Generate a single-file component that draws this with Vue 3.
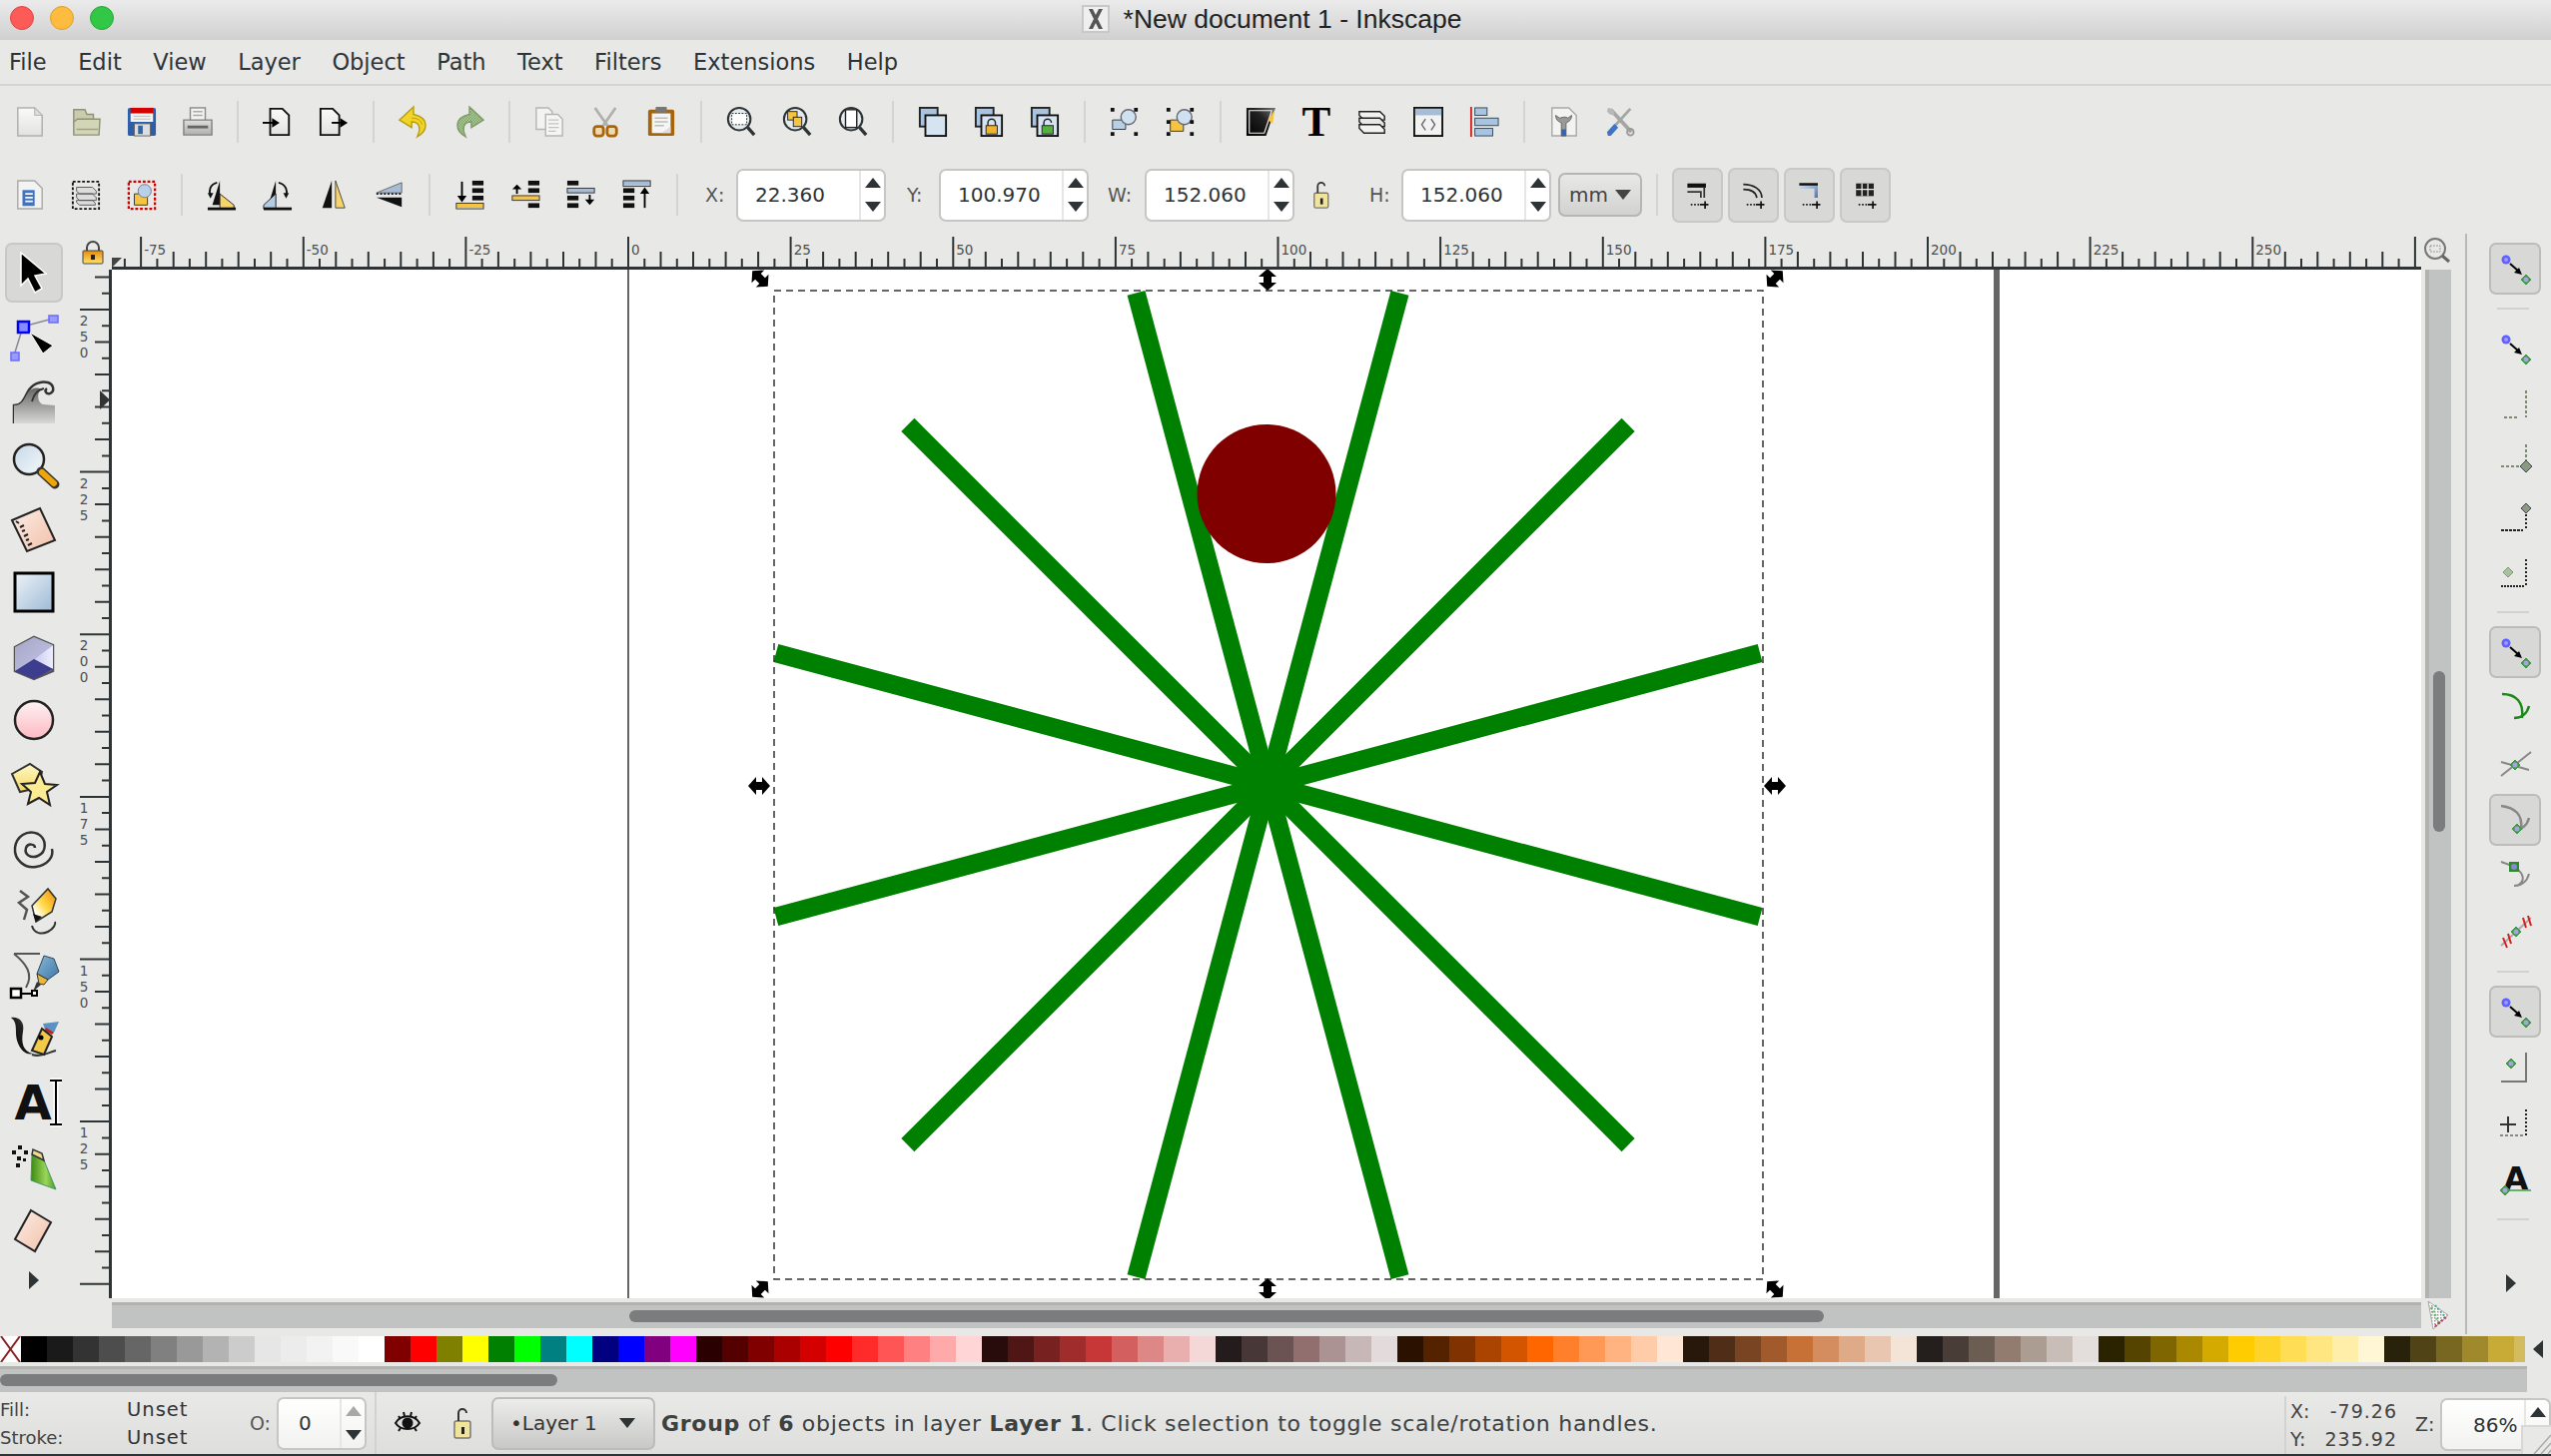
<script setup>
const menus = ['File','Edit','View','Layer','Object','Path','Text','Filters','Extensions','Help']

const K = '#111'
const mag = (inner) => `<circle cx="14" cy="13" r="12" fill="#e4ebef" stroke="#2e3436" stroke-width="2.2"/>${inner}<path d="M23 22l7 8" stroke="#2e3436" stroke-width="3.5"/>`
const node = (x, y, r = 5) => `<path d="M${x} ${y - r}l${r} ${r}-${r} ${r}-${r}-${r}z" fill="#3f9a46" stroke="#3f9a46"/><circle cx="${x}" cy="${y}" r="${r * 0.5}" fill="#a5a5dc"/>`
const blue = (x, y) => `<circle cx="${x}" cy="${y}" r="4.5" fill="#6060ff"/><circle cx="${x}" cy="${y}" r="2" fill="#9a9aff"/>`
const snapArrow = `${blue(7, 7)}<path d="M11 11l9 8" stroke="#000" stroke-width="2"/><path d="M23 22l-8-2 5-5z" fill="#000"/>${node(27, 27)}`
const dashG = 'stroke="#7b8a70" stroke-width="2" stroke-dasharray="3 2" fill="none"'
const dashK = 'stroke="#222" stroke-width="2" stroke-dasharray="2 2" fill="none"'
const bars = (arr) => arr.map(([x, y, w, c]) => `<rect x="${x}" y="${y}" width="${w}" height="5" fill="${c}"/>`).join('')
const toggleBase = (top) => `${top}<path d="M8 27h11" stroke="#222" stroke-width="2" stroke-dasharray="2 2"/><path d="M19 27h10M25 23v9" stroke="#111" stroke-width="2"/>`

const icons = {
  new: `<path d="M3 1h18l8 8v22H3z" fill="url(#gPage)" stroke="#b0b0ae" stroke-width="1.6"/><path d="M21 1v8h8z" fill="#dededc" stroke="#b0b0ae"/>`,
  open: `<path d="M3 3h12l2 5h7v10H3z" fill="#c9cdab" stroke="#8f9274" stroke-width="1.5"/><path d="M3 30V16l4-3h24l-1 17z" fill="#d2d5b6" stroke="#8f9274" stroke-width="1.5"/><path d="M6 24h23" stroke="#9da083" stroke-width="1.5"/>`,
  save: `<rect x="1" y="1" width="30" height="30" rx="2" fill="#2f5ea8"/><rect x="4" y="1" width="24" height="6" fill="#d40000"/><rect x="4" y="7" width="24" height="9" fill="#f3f3f1"/><path d="M7 10h18M7 13h18" stroke="#bbb"/><rect x="8" y="18" width="17" height="13" fill="#dedede" stroke="#666"/><rect x="12" y="20" width="5" height="9" fill="#37669e"/>`,
  print: `<rect x="8" y="1" width="16" height="14" fill="#f2f2f0" stroke="#8a8a88" stroke-width="1.5"/><path d="M11 5h10M11 9h10" stroke="#aaa" stroke-width="1.5"/><path d="M1 14h30v16H1z" fill="url(#gGrey)" stroke="#80807e" stroke-width="1.5"/><rect x="5" y="20" width="22" height="3" fill="#666"/>`,
  import: `<path d="M8 2h13l7 7v21H8z" fill="url(#gPage)" stroke="${K}" stroke-width="2"/><path d="M0 17h15" stroke="#000" stroke-width="2"/><path d="M18 17l-8-5v10z" fill="#000"/>`,
  export: `<path d="M2 2h13l7 7v21H2z" fill="url(#gPage)" stroke="${K}" stroke-width="2"/><path d="M14 17h14" stroke="#000" stroke-width="2"/><path d="M31 17l-8-5v10z" fill="#000"/>`,
  undo: `<path d="M16 0L1 14l13 8v-6c7 0 11 5 6 16 11-6 14-20-4-24z" fill="#f2d426" stroke="#b79d10" stroke-width="1.5"/><path d="M14 12c6 0 10 2 11 7" stroke="#b79d10" fill="none"/>`,
  redo: `<path d="M16 0l15 14-13 8v-6c-7 0-11 5-6 16C1 26-2 12 16 8z" fill="url(#pGreen)" stroke="#7f9a6c" stroke-width="1.5"/>`,
  copy: `<path d="M2 1h13l4 4v19H2z" fill="#f3f3f1" stroke="#b5b5b3" stroke-width="1.5"/><path d="M12 8h13l5 5v18H12z" fill="#f5f5f3" stroke="#b5b5b3" stroke-width="1.5"/><path d="M15 14h11M15 18h11M15 22h11M15 26h8" stroke="#c2c2c0" stroke-width="1.5"/>`,
  cut: `<path d="M5 1l14 20M27 1L13 21" stroke="#b0b0ae" stroke-width="3"/><rect x="4" y="21" width="10" height="10" rx="3" fill="#f0d9b0" stroke="#a8660c" stroke-width="3"/><rect x="18" y="21" width="10" height="10" rx="3" fill="#f0d9b0" stroke="#a8660c" stroke-width="3"/>`,
  paste: `<rect x="2" y="3" width="28" height="28" rx="2" fill="#a5650f"/><rect x="6" y="7" width="20" height="21" fill="#f5f5f3"/><rect x="10" y="0" width="12" height="6" rx="1" fill="#777"/><path d="M9 12h14M9 16h14M9 20h10" stroke="#bdbdbb" stroke-width="1.5"/><path d="M16 28l10-7v7z" fill="#ddd"/>`,
  zsel: mag(`<rect x="6" y="7" width="16" height="12" fill="#fff" stroke="#222" stroke-dasharray="2 1.5"/>`),
  zdraw: mag(`<rect x="6" y="5" width="10" height="9" fill="#f5c542" stroke="#222"/><rect x="12" y="11" width="9" height="10" fill="#f5c542" stroke="#222"/>`),
  zpage: mag(`<rect x="8" y="3" width="12" height="19" fill="#fff" stroke="#222" stroke-width="1.5"/>`),
  dup: `<rect x="2" y="1" width="19" height="20" fill="#a8c4e0" stroke="#222" stroke-width="2"/><rect x="8" y="9" width="22" height="22" fill="#d6e4f2" stroke="${K}" stroke-width="2"/>`,
  clone: `<rect x="2" y="1" width="19" height="20" fill="#a8c4e0" stroke="#222" stroke-width="2"/><rect x="8" y="9" width="22" height="22" fill="#d6e4f2" stroke="${K}" stroke-width="2"/><rect x="13" y="20" width="12" height="9" fill="#f0b32e" stroke="#222"/><path d="M15 20v-3a4 4 0 0 1 8 0v3" fill="none" stroke="#222" stroke-width="1.5"/>`,
  unlink: `<rect x="2" y="1" width="19" height="20" fill="#a8c4e0" stroke="#222" stroke-width="2"/><rect x="8" y="9" width="22" height="22" fill="#d6e4f2" stroke="${K}" stroke-width="2"/><rect x="13" y="20" width="12" height="9" fill="#55b03e" stroke="#222"/><path d="M15 20v-3a4 4 0 0 1 8 0" fill="none" stroke="#222" stroke-width="1.5"/>`,
  same1: `<path d="M3 24h14V14H3z" fill="#b8cfe6" stroke="#333"/><circle cx="20" cy="11" r="8" fill="#cfe0ee" stroke="#667" stroke-width="1.5"/><path d="M1 1h4v4H1zM26 1h4v4h-4zM1 27h4v4H1zM26 27h4v4h-4z" fill="#111"/>`,
  same2: `<path d="M5 26h14V14H5z" fill="#f5c542" stroke="#333"/><circle cx="20" cy="11" r="8" fill="#cfe0ee" stroke="#667" stroke-width="1.5"/><path d="M1 1h4v4H1zM26 1h4v4h-4zM1 27h4v4H1zM26 27h4v4h-4zM1 14h4v4H1zM26 14h4v4h-4z" fill="#111"/>`,
  fs: `<path d="M1 1h31L22 31H1z" fill="url(#gDark)"/><path d="M4 4h24L20 28H4z" fill="none" stroke="#eee" stroke-width="1.2"/><path d="M24 14l7-11-2 15z" fill="#f5c542"/>`,
  text: `<text x="16" y="31" text-anchor="middle" class="svg-serif" font-size="46">T</text>`,
  layers: `<path d="M2 5h22l5 5v4H7l-5-5z" fill="#f2f2f0" stroke="#222" stroke-width="1.5"/><path d="M2 12h22l5 5v4H7l-5-5z" fill="#e8e8e6" stroke="#222" stroke-width="1.5"/><path d="M2 19h22l5 5v4H7l-5-5z" fill="#f2f2f0" stroke="#222" stroke-width="1.5"/>`,
  xml: `<rect x="1" y="1" width="30" height="30" fill="#f2f2f0" stroke="#111" stroke-width="2"/><rect x="2" y="2" width="28" height="7" fill="#a5bdd6"/><path d="M13 13l-4 6 4 6M19 13l4 6-4 6" fill="none" stroke="#667" stroke-width="1.5"/>`,
  align: `<path d="M2 0v32" stroke="#c22" stroke-width="2"/><rect x="6" y="1" width="13" height="8" fill="#a8c4e0" stroke="#345"/><rect x="6" y="12" width="25" height="8" fill="#a8c4e0" stroke="#345"/><rect x="6" y="23" width="19" height="8" fill="#a8c4e0" stroke="#345"/>`,
  prefs: `<path d="M3 1h18l8 8v22H3z" fill="#f3f3f1" stroke="#a8a8a6" stroke-width="1.5"/><path d="M7 9c0 6 4 7 6 8v14h5V17c3-1 6-3 6-8l-4 3-2-1-3 0-4 1z" fill="#9a9a98" stroke="#666"/><rect x="13" y="24" width="5" height="7" fill="#3565b0"/>`,
  tools: `<path d="M6 3l22 24" stroke="#a5a5a3" stroke-width="4"/><path d="M27 2L6 25" stroke="#a5a5a3" stroke-width="3"/><path d="M3 1c5 0 8 4 6 8l-4-1-3-3z" fill="#b8b8b6"/><path d="M3 31l-1-4 8-9 4 4-8 9z" fill="#3f74c4"/><circle cx="27" cy="27" r="3.5" fill="none" stroke="#999" stroke-width="2"/>`,
  selall: `<path d="M3 1h18l8 8v22H3z" fill="#f3f3f1" stroke="#a8a8a6" stroke-width="1.5"/><path d="M8 11h13v17H8z" fill="#3f74c4"/><path d="M11 15h8M11 19h8M11 23h8" stroke="#fff" stroke-width="2"/>`,
  selallL: `<rect x="2" y="2" width="28" height="29" fill="none" stroke="#111" stroke-width="2" stroke-dasharray="3 2"/><path d="M6 8h17l4 4v3H9l-3-3zM6 15h17l4 4v3H9l-3-3zM6 22h17l3 3v2H9l-3-3z" fill="#ddd" stroke="#555"/>`,
  desel: `<rect x="2" y="2" width="28" height="29" fill="none" stroke="#c00" stroke-width="2.4" stroke-dasharray="3 2"/><path d="M8 15h14v12H8z" fill="#f5c542" stroke="#333"/><circle cx="19" cy="12" r="7" fill="#b8d0ea" stroke="#778"/>`,
  rotl: `<path d="M14 1L6 27h8z" fill="#111"/><path d="M14 31V15l15 12v4z" fill="#f6d46a" stroke="#222"/><path d="M1 31h30" stroke="#111" stroke-width="3"/><path d="M11 3C3 5 2 12 4 17" fill="none" stroke="#111" stroke-width="2"/><path d="M1 14l6 0-3 6z" fill="#111"/>`,
  rotr: `<path d="M14 1L6 27h8z" fill="#111"/><path d="M14 31V15L1 27v4z" fill="#b4cbe2" stroke="#222"/><path d="M1 31h30" stroke="#111" stroke-width="3"/><path d="M17 3c8 2 10 9 8 14" fill="none" stroke="#111" stroke-width="2"/><path d="M22 14h6l-3 6z" fill="#111"/>`,
  fliph: `<path d="M14 1L4 30h10z" fill="#111"/><path d="M18 1l10 29H18z" fill="#f6d46a" stroke="#444"/>`,
  flipv: `<path d="M29 3L2 14h27z" fill="#a5bdd6" stroke="#666"/><path d="M2 15h27" stroke="#111" stroke-dasharray="2 2" stroke-width="2"/><path d="M29 29L2 19h27z" fill="#111"/>`,
  top: bars([[19, 1, 12, K], [19, 9, 12, K], [19, 17, 12, K], [2, 25, 29, '#f5c542']]) + `<rect x="2" y="25" width="29" height="6" fill="none" stroke="#333"/><path d="M8 2v18" stroke="#000" stroke-width="2"/><path d="M8 24l-5-7h10z" fill="#000"/>`,
  raise: bars([[19, 1, 12, K], [19, 9, 12, K], [2, 17, 29, '#f5c542'], [19, 25, 12, K]]) + `<rect x="2" y="17" width="29" height="5" fill="none" stroke="#333"/><path d="M7 5l-5 5h10z" fill="#000"/><path d="M7 9v6" stroke="#000" stroke-width="2"/>`,
  lower: bars([[1, 1, 12, K], [1, 9, 29, '#a5bdd6'], [1, 17, 12, K], [1, 25, 12, K]]) + `<rect x="1" y="9" width="29" height="5" fill="none" stroke="#333"/><path d="M25 16v6" stroke="#000" stroke-width="2"/><path d="M25 27l-5-6h10z" fill="#000"/>`,
  bottom: bars([[1, 1, 29, '#a5bdd6'], [1, 9, 12, K], [1, 17, 12, K], [1, 25, 12, K]]) + `<rect x="1" y="1" width="29" height="6" fill="none" stroke="#333"/><path d="M24 12v18" stroke="#000" stroke-width="2"/><path d="M24 8l-5 7h10z" fill="#000"/>`,
  t1: toggleBase(`<path d="M4 2h22v5H4z" fill="#111"/><path d="M24 7v12M4 12h16v7" fill="none" stroke="#333" stroke-width="2"/>`),
  t2: toggleBase(`<path d="M4 3c12 0 22 6 22 16M4 9c8 0 15 3 16 10" fill="none" stroke="#222" stroke-width="2"/>`),
  t3: toggleBase(`<path d="M4 3h22v16h-4V8H4z" fill="url(#gBlue)"/><path d="M4 3h22" stroke="#111" stroke-width="3"/>`),
  t4: toggleBase(`<path d="M5 2h21v15H5z" fill="#222"/><path d="M12 2v15M19 2v15M5 9h21" stroke="#eee" stroke-width="1.5"/>`),
  eye: `<path d="M1 16c5-9 19-9 24 0-5 8-19 8-24 0z" fill="#ddd" stroke="#111" stroke-width="2"/><circle cx="13" cy="16" r="5.5" fill="#111"/><path d="M4 9l2 3M9 5l1 4M17 5l-1 4M22 9l-2 3M4 24l2-3M22 24l-2-3" stroke="#111" stroke-width="2"/>`,
  unlock: `<rect x="2" y="14" width="16" height="17" rx="2" fill="#f0e49a" stroke="#777" stroke-width="1.5"/><path d="M6 14V6a4 4 0 0 1 8 0" fill="none" stroke="#333" stroke-width="2"/><rect x="9" y="20" width="3" height="7" fill="#222"/>`,
  lock: `<rect x="1" y="10" width="20" height="13" rx="1" fill="url(#gLock)" stroke="#444"/><path d="M5 10V7a6 6 0 0 1 12 0v3" fill="none" stroke="#444" stroke-width="2"/><rect x="9" y="14" width="4" height="5" fill="#222"/>`,
  search: `<circle cx="13" cy="13" r="10" fill="none" stroke="#777" stroke-width="2"/><rect x="8" y="10" width="10" height="6" fill="none" stroke="#999" stroke-dasharray="2 1"/><path d="M20 20l7 6" stroke="#666" stroke-width="3"/>`,
  rgb: `<path d="M3 2l20 14L8 30z" fill="url(#pRgb)" stroke="#aaa"/><path d="M6 8l8 16" stroke="#4a4" stroke-width="3" stroke-dasharray="2 2" opacity=".7"/><path d="M10 6l10 12" stroke="#2a8" stroke-width="2" stroke-dasharray="2 2" opacity=".7"/><path d="M10 27l12-10" stroke="#a24" stroke-width="2.5" stroke-dasharray="2 2" opacity=".8"/>`,
  // left tools
  selector: `<path d="M11 3v33l7-7 7 14 7-4-7-13 11-2z" fill="#000" stroke="#fff" stroke-width="1.5"/>`,
  nodeTool: `<path d="M13 12L4 41M13 12L43 4" stroke="#889" stroke-width="1.5"/><rect x="8" y="7" width="11" height="11" fill="#8a8aff" stroke="#00f" stroke-width="2.5"/><rect x="39" y="1" width="9" height="7" fill="#9a9aff" stroke="#6a6aff" stroke-width="1.5"/><rect x="1" y="38" width="8" height="8" fill="#9a9aff" stroke="#6a6aff" stroke-width="1.5"/><path d="M20 18l23 13-10 8z" fill="#000" stroke="#fff"/>`,
  tweak: `<path d="M4 46V28c8 0 10-6 14-14 4-7 12-11 20-9 6 2 7 9 2 11-4 1-6-3-3-5" fill="none" stroke="#333" stroke-width="2.5"/><path d="M4 28c8 0 10-6 14-13 3-4 9-6 13-3-4 3-4 13 2 15l12 1v18H4z" fill="url(#gWave)"/><path d="M22 24c2-8 7-12 12-13" fill="none" stroke="#333" stroke-width="2"/>`,
  zoomTool: `<circle cx="19" cy="18" r="15" fill="url(#gGlass)" stroke="#222" stroke-width="2.5"/><path d="M31 30l14 13" stroke="#333" stroke-width="9" stroke-linecap="round"/><path d="M32 31l12 11" stroke="#f0a50a" stroke-width="6" stroke-linecap="round"/>`,
  measure: `<path d="M2 15L30 3l15 32-28 11z" fill="url(#gPink)" stroke="#222" stroke-width="2"/><path d="M6 16l3 2M10 22l4-2M12 26l3-1M14 31l4-2M16 35l3-1M18 40l4-2" stroke="#222" stroke-width="2"/>`,
  rectTool: `<rect x="5" y="4" width="38" height="38" fill="url(#gRect)" stroke="#000" stroke-width="3"/>`,
  box: `<path d="M5 14L24 4l19 8v26L24 46 5 38z" fill="#8f8fc0" stroke="#555" stroke-width="2.5"/><path d="M24 26L43 12v24z" fill="url(#gBoxR)"/><path d="M5 14L24 4l19 8-19 14v0L5 38z" fill="url(#gBoxL)"/><path d="M5 38l19-12 19 10-19 10z" fill="#3d3d90"/>`,
  ell: `<ellipse cx="24" cy="24" rx="19" ry="19" fill="url(#gBall)" stroke="#222" stroke-width="2.5"/>`,
  star: `<path d="M2 14L20 4l12 8-4 16-18 4z" fill="url(#gYel)" stroke="#333" stroke-width="2"/><path d="M30 12l5 12 12 1-10 7 3 13-11-7-11 6 3-12-9-8 13-1z" fill="#fbeb93" stroke="#222" stroke-width="2"/>`,
  spiral: `<path d="M25 24c0-4-7-5-9 0-2 7 5 11 12 8 9-4 9-17 0-22C17 5 6 13 5 24c-1 12 10 21 21 19 12-2 18-10 16-18" fill="none" stroke="#333" stroke-width="2.5"/>`,
  pencil: `<path d="M10 3l8 6-9 6 8 7-3 10" fill="none" stroke="#555" stroke-width="2.5"/><path d="M26 34l-4-16L38 1l8 10-4 13z" fill="url(#gPen)" stroke="#333" stroke-width="1.5"/><path d="M26 34l-3-8 9 3z" fill="#111"/><path d="M22 38c2 8 10 9 16 6 6-3 8-8 7-10" fill="none" stroke="#333" stroke-width="2"/>`,
  pen: `<path d="M4 2h26M4 2c12 10 20 20 12 34" fill="none" stroke="#555" stroke-width="2"/><rect x="1" y="37" width="10" height="9" fill="#fff" stroke="#000" stroke-width="2.5"/><path d="M11 42h11" stroke="#000" stroke-width="2"/><rect x="22" y="39" width="5" height="5" fill="#fff" stroke="#000" stroke-width="2"/><path d="M27 22l7-18 10 3 5 13-11 8z" fill="url(#gPenB)" stroke="#345"/><path d="M27 22l11 6-4 5-5-1z" fill="#e9b73a" stroke="#333"/><path d="M27 30l-4 10 8-7" fill="#333"/>`,
  calli: `<path d="M1 3c8-1 14 4 12 14-2 11 0 20 10 22C14 42 6 30 6 18 6 9 5 6 1 3z" fill="url(#gDark)"/><path d="M22 40c8 3 16-2 24-4" fill="none" stroke="#333" stroke-width="2"/><path d="M33 9l16-2-5 11-9-3z" fill="#5b92c2"/><path d="M36 13l8 5-2 2-7-4z" fill="#c02020"/><path d="M32 14l10 8-8 18-12-4z" fill="#f3c94a" stroke="#222" stroke-width="2"/><circle cx="31" cy="23" r="2.5" fill="#000"/>`,
  textTool: `<text x="23" y="41" text-anchor="middle" class="svg-bold" font-size="48">A</text><path d="M42 2h12M48 2v44M42 46h12" transform="translate(-2 0)" stroke="#fff" stroke-width="5"/><path d="M42 2h12M48 2v44M42 46h12" transform="translate(-2 0)" stroke="#000" stroke-width="2"/>`,
  spray: `<g fill="#111"><rect x="2" y="8" width="4" height="4"/><rect x="8" y="3" width="4" height="4"/><rect x="14" y="8" width="4" height="4"/><rect x="7" y="14" width="4" height="4"/><rect x="13" y="16" width="3" height="3"/><rect x="6" y="21" width="4" height="4"/></g><path d="M22 12l12 6 12 29-25-9z" fill="url(#gGreen)" stroke="#496" stroke-width="1"/><path d="M22 12l12 6-2-7-9-4z" fill="#f0d98a" stroke="#333" stroke-width="1.5"/>`,
  eraser: `<path d="M21 4l20 12-16 29L5 33z" fill="url(#gPink)" stroke="#222" stroke-width="2"/>`,
  // right snap
  s1: snapArrow,
  s2: `<path d="M5 29h14" ${dashG}/><path d="M27 2v27" ${dashG}/>`,
  s3: `<path d="M2 22h18" ${dashG}/><path d="M27 0v16" ${dashG}/><path d="M27 16l6 6-6 6-6-6z" fill="#8a9a80" stroke="#445"/>`,
  s4: `<path d="M2 30h22" stroke="#222" stroke-width="2" stroke-dasharray="3 1"/><path d="M27 14v16" ${dashK}/><path d="M27 3l5 5-5 5-5-5z" fill="#8a9a80" stroke="#445"/>`,
  s5: `<path d="M2 30h24" stroke="#222" stroke-width="2" stroke-dasharray="2 1"/><path d="M27 3v27" ${dashK}/><path d="M9 11l5 5-5 5-5-5z" fill="#aac0a0" stroke="#7a9a70"/>`,
  b1: `<path d="M3 2c14 0 22 8 20 24M30 14c-2 8-8 12-15 12" fill="none" stroke="#1a8a1a" stroke-width="2.5"/>`,
  b2: `<path d="M2 28L32 4M2 14l28 8" stroke="#888" stroke-width="2"/>${node(16, 17, 5)}`,
  b3: `<path d="M2 2c14 2 22 8 20 24M30 14c-2 8-8 12-15 12" fill="none" stroke="#888" stroke-width="2.5"/>${node(18, 25, 5)}`,
  b4: `<path d="M2 2l14 5M16 8c10 6 10 14 2 18M30 14c-2 8-8 12-15 12" fill="none" stroke="#888" stroke-width="2"/><rect x="10" y="2" width="10" height="10" fill="#2d8a2d"/><circle cx="15" cy="7" r="3" fill="#8a8ad0"/>`,
  b5: `<path d="M2 30L32 2" stroke="#aaa" stroke-width="2"/><path d="M4 22l4 10M9 18l3 10M24 2l3 10M29 0l3 10" stroke="#d81e1e" stroke-width="2"/>${node(17, 16, 5)}`,
  o1: `<path d="M2 30h26M27 1v29" fill="none" stroke="#777" stroke-width="2"/>${node(12, 12, 5)}`,
  o2: `<path d="M1 17h16M9 9v16" stroke="#333" stroke-width="2"/><path d="M1 28h24" stroke="#888" stroke-width="2" stroke-dasharray="3 2"/><path d="M27 2v26" ${dashK}/>`,
  o3: `<text x="17" y="26" text-anchor="middle" class="svg-bold" font-size="32">A</text><path d="M8 27h24" stroke="#6ab06a" stroke-width="2"/>${node(6, 27, 5)}`,
}

const row1 = ['new','open','save','print','|','import','export','|','undo','redo','|','copy','cut','paste','|','zsel','zdraw','zpage','|','dup','clone','unlink','|','same1','same2','|','fs','text','layers','xml','align','|','prefs','tools']
const row2 = ['selall','selallL','desel','|','rotl','rotr','fliph','flipv','|','top','raise','lower','bottom','|']
const tools = ['selector','nodeTool','tweak','zoomTool','measure','rectTool','box','ell','star','spiral','pencil','pen','calli','textTool','spray','eraser']
const snaps = [
  { i: 's1', on: true }, { sep: true },
  { i: 's1' }, { i: 's2' }, { i: 's3' }, { i: 's4' }, { i: 's5' }, { sep: true },
  { i: 's1', on: true }, { i: 'b1' }, { i: 'b2' }, { i: 'b3', on: true }, { i: 'b4' }, { i: 'b5' }, { sep: true },
  { i: 's1', on: true }, { i: 'o1' }, { i: 'o2' }, { i: 'o3' }, { sep: true },
]
const toggles = ['t1','t2','t3','t4']
const fields = [
  { k: 'fx', l: 'X:', v: '22.360' },
  { k: 'fy', l: 'Y:', v: '100.970' },
  { k: 'fw', l: 'W:', v: '152.060' },
]

const palette = '000000 1a1a1a 333333 4d4d4d 666666 808080 999999 b3b3b3 cccccc e6e6e6 ececec f2f2f2 f9f9f9 ffffff 800000 ff0000 808000 ffff00 008000 00ff00 008080 00ffff 000080 0000ff 800080 ff00ff 2b0000 550000 800000 aa0000 d40000 ff0000 ff2a2a ff5555 ff8080 ffaaaa ffd5d5 280b0b 501616 782121 a02c2c c83737 d35f5f de8787 e9afaf f4d7d7 241c1c 483737 6c5353 916f6f ac9393 c8b7b7 e3dbdb 2b1100 552200 803300 aa4400 d45500 ff6600 ff7f2a ff9955 ffb380 ffccaa ffe6d5 28170b 502d16 784421 a05a2c c87137 d38d5f deaa87 e9c6af f4e3d7 241f1c 483e37 6c5d53 917c6f ac9d93 c8beb7 e3dedb 2b2200 554400 806600 aa8800 d4aa00 ffcc00 ffd42a ffdd55 ffe680 ffeeaa fff6d5 28220b 504416 786721 a0892c c8ab37 d3bc5f'.split(' ').map(c => '#' + c)

// rulers: 1 mm = 6.505 px, origin at page x 629 and 250 mm at page y 310
const PX = 6.505
const hx = (mm) => 629 + mm * PX
const vy = (mm) => 310 + (250 - mm) * PX
let hp = ''
const hLabels = []
for (let i = -32; i <= 110; i++) {
  const mm = i * 2.5, x = hx(mm).toFixed(1)
  const len = i % 10 === 0 ? 30 : i % 2 === 0 ? 15 : 8
  hp += `M${x} 267V${267 - len}`
  if (i % 10 === 0 && mm < 275) hLabels.push({ x: hx(mm) + 3, t: mm < 0 ? '-' + -mm : '' + mm })
}
let vp = ''
const vLabels = []
for (let i = 103; i >= 40; i--) {
  const mm = i * 2.5, y = vy(mm).toFixed(1)
  const len = i % 10 === 0 ? 30 : i % 2 === 0 ? 15 : 8
  vp += `M110 ${y}H${110 - len}`
  if (i % 10 === 0) {
    ;[...String(mm)].forEach((d, n) => {
      const ly = vy(mm) + 16 + n * 16
      if (ly < 1299) vLabels.push({ y: ly, t: d })
    })
  }
}

// star of twelve rays around the selection's centre
const CX = 1269.5, CY = 786, R = 510
const rays = Array.from({ length: 6 }, (_, k) => {
  const a = ((15 + 30 * k) * Math.PI) / 180
  const dx = R * Math.sin(a), dy = R * Math.cos(a)
  return { x1: CX - dx, y1: CY - dy, x2: CX + dx, y2: CY + dy }
})
const handles = [
  { x: 761, y: 279, r: -45 }, { x: 1269, y: 280, r: 0 }, { x: 1777, y: 279, r: 45 },
  { x: 760, y: 787, r: 90 }, { x: 1777, y: 787, r: 90 },
  { x: 761, y: 1291, r: 45 }, { x: 1269, y: 1291, r: 0 }, { x: 1777, y: 1291, r: -45 },
]
</script>

<template>
  <div class="win">
    <svg class="defs" width="0" height="0">
      <defs>
        <linearGradient id="gPage" x1="0" y1="0" x2="0" y2="1"><stop offset="0" stop-color="#fafafa"/><stop offset="1" stop-color="#e2e2e0"/></linearGradient>
        <linearGradient id="gGrey" x1="0" y1="0" x2="0" y2="1"><stop offset="0" stop-color="#dededc"/><stop offset="1" stop-color="#b0b0ae"/></linearGradient>
        <linearGradient id="gDark" x1="0" y1="1" x2="1" y2="0"><stop offset="0" stop-color="#000"/><stop offset=".6" stop-color="#222"/><stop offset="1" stop-color="#777"/></linearGradient>
        <linearGradient id="gBlue" x1="0" y1="0" x2="1" y2="1"><stop offset="0" stop-color="#d5e3f0"/><stop offset="1" stop-color="#4a76ad"/></linearGradient>
        <linearGradient id="gLock" x1="0" y1="0" x2="0" y2="1"><stop offset="0" stop-color="#e58a0e"/><stop offset="1" stop-color="#ffe36b"/></linearGradient>
        <linearGradient id="gWave" x1="0" y1="0" x2="0" y2="1"><stop offset="0" stop-color="#666"/><stop offset="1" stop-color="#d8d8d6"/></linearGradient>
        <linearGradient id="gGlass" x1="0" y1="0" x2="1" y2="1"><stop offset="0" stop-color="#c5d8e6"/><stop offset="1" stop-color="#f6f9fb"/></linearGradient>
        <linearGradient id="gPink" x1="0" y1="0" x2="1" y2="1"><stop offset="0" stop-color="#fbeee6"/><stop offset="1" stop-color="#f2bfa8"/></linearGradient>
        <linearGradient id="gRect" x1="0" y1="0" x2="1" y2="1"><stop offset="0" stop-color="#eef3f8"/><stop offset="1" stop-color="#9dbad6"/></linearGradient>
        <linearGradient id="gBoxR" x1="0" y1="0" x2="1" y2="0"><stop offset="0" stop-color="#c9c9ee"/><stop offset="1" stop-color="#eeeeff"/></linearGradient>
        <linearGradient id="gBoxL" x1="0" y1="0" x2="1" y2="1"><stop offset="0" stop-color="#a5a5c5"/><stop offset="1" stop-color="#c5c5ea"/></linearGradient>
        <linearGradient id="gBall" x1="0" y1="0" x2="0" y2="1"><stop offset="0" stop-color="#fbf3f3"/><stop offset="1" stop-color="#ffb8c2"/></linearGradient>
        <linearGradient id="gYel" x1="0" y1="0" x2="0" y2="1"><stop offset="0" stop-color="#fff8c8"/><stop offset="1" stop-color="#f5d860"/></linearGradient>
        <linearGradient id="gPen" x1="1" y1="0" x2="0" y2="1"><stop offset="0" stop-color="#f08a00"/><stop offset=".5" stop-color="#ffd94a"/><stop offset=".8" stop-color="#fff"/><stop offset="1" stop-color="#fff"/></linearGradient>
        <linearGradient id="gPenB" x1="0" y1="0" x2="1" y2="1"><stop offset="0" stop-color="#8ab8d6"/><stop offset="1" stop-color="#3d77a8"/></linearGradient>
        <linearGradient id="gGreen" x1="0" y1="0" x2="1" y2="0"><stop offset="0" stop-color="#3c8a10"/><stop offset=".6" stop-color="#9ad65a"/><stop offset="1" stop-color="#4a9a20"/></linearGradient>
        <pattern id="pGreen" width="3" height="3" patternUnits="userSpaceOnUse"><rect width="3" height="3" fill="#dce4d2"/><rect width="1.5" height="1.5" fill="#4c8a2c"/><rect x="1.5" y="1.5" width="1.5" height="1.5" fill="#4c8a2c"/></pattern>
        <pattern id="pRgb" width="3" height="3" patternUnits="userSpaceOnUse"><rect width="3" height="3" fill="#fff"/><rect width="1.5" height="1.5" fill="#999"/></pattern>
      </defs>
    </svg>

    <header class="title">
      <div class="lights"><i class="l-r"></i><i class="l-y"></i><i class="l-g"></i></div>
      <div class="title-c">
        <svg class="xicon" width="28" height="28" viewBox="0 0 28 28"><rect width="28" height="28" fill="#c8c8c8"/><rect x="2" y="2" width="24" height="24" fill="#efefef"/><path d="M7 4h4l10 20h-4zM17 4h4L11 24H7z" fill="#555"/></svg>
        <span>*New document 1 - Inkscape</span>
      </div>
      <div></div>
    </header>

    <nav class="menu"><span v-for="m in menus" :key="m">{{ m }}</span></nav>

    <div class="tb tb1">
      <template v-for="(ic, n) in row1" :key="n">
        <b v-if="ic === '|'" class="vsep"></b>
        <svg v-else class="ti" viewBox="0 0 32 32" v-html="icons[ic]"></svg>
      </template>
    </div>

    <div class="tb tb2">
      <template v-for="(ic, n) in row2" :key="n">
        <b v-if="ic === '|'" class="vsep"></b>
        <svg v-else class="ti" viewBox="0 0 32 32" v-html="icons[ic]"></svg>
      </template>
      <div v-for="f in fields" :key="f.k" class="field" :class="f.k">
        <label>{{ f.l }}</label>
        <div class="spin">
          <span class="sv">{{ f.v }}</span>
          <span class="sa"><i class="up"></i><i class="dn"></i></span>
        </div>
      </div>
      <svg class="padlock" viewBox="0 0 32 32" v-html="icons.unlock"></svg>
      <div class="field fh">
        <label>H:</label>
        <div class="spin">
          <span class="sv">152.060</span>
          <span class="sa"><i class="up"></i><i class="dn"></i></span>
        </div>
      </div>
      <div class="unit"><span>mm</span><i class="dn"></i></div>
      <b class="vsep vsep2"></b>
      <div class="toggles">
        <div v-for="t in toggles" :key="t" class="tog"><svg viewBox="0 0 32 32" width="27" height="27" v-html="icons[t]"></svg></div>
      </div>
    </div>

    <div class="main">
      <aside class="tools">
        <div v-for="(t, n) in tools" :key="t" class="tool" :class="{ on: n === 0 }">
          <svg viewBox="0 0 48 48" width="48" height="48" v-html="icons[t]"></svg>
        </div>
        <div class="more"><i class="rt"></i></div>
      </aside>

      <section class="center">
        <div class="ruler-row">
          <div class="corner">
            <svg class="rlock" viewBox="0 0 22 24" width="22" height="24" v-html="icons.lock"></svg>
          </div>
          <svg class="hr" width="2312" height="36" viewBox="112 234 2312 36">
            <path d="M112 258h10l-10 10z" fill="#444"/>
            <path :d="hp" stroke="#2e3436" stroke-width="2" fill="none"/>
            <rect x="112" y="267" width="2312" height="3" fill="#2e3436"/>
            <text v-for="l in hLabels" :key="l.t" :x="l.x" y="255" class="rt-t">{{ l.t }}</text>
          </svg>
          <svg class="srch" width="30" height="30" viewBox="0 0 30 30" v-html="icons.search"></svg>
        </div>

        <div class="canvas-row">
          <svg class="vr" width="44" height="1030" viewBox="68 270 44 1030">
            <path :d="vp" stroke="#2e3436" stroke-width="2" fill="none"/>
            <rect x="109" y="270" width="3" height="1030" fill="#2e3436"/>
            <path d="M100 391l10 9.500-10 9.500z" fill="#333"/>
            <text v-for="(l, n) in vLabels" :key="n" x="84" :y="l.y" class="rt-t" text-anchor="middle">{{ l.t }}</text>
          </svg>

          <svg class="canvas" width="2312" height="1030" viewBox="112 270 2312 1030">
            <rect x="112" y="270" width="2312" height="1030" fill="#fff"/>
            <rect x="628" y="270" width="2" height="1030" fill="#666"/>
            <rect x="1996" y="270" width="6" height="1030" fill="#666"/>
            <line v-for="(r, n) in rays" :key="n" :x1="r.x1" :y1="r.y1" :x2="r.x2" :y2="r.y2" stroke="#008000" stroke-width="18.500"/>
            <circle cx="1268" cy="494.500" r="69.500" fill="#800000"/>
            <rect x="775" y="291" width="990" height="990" fill="none" stroke="#333" stroke-width="1.500" stroke-dasharray="7 5"/>
            <path v-for="(h, n) in handles" :key="'h' + n" :transform="`translate(${h.x} ${h.y}) rotate(${h.r})`" d="M0-11L9-3H4V3H9L0 11-9 3H-4V-3H-9Z" fill="#000"/>
          </svg>

          <div class="vscroll"><div class="vthumb"></div></div>
        </div>

        <div class="hs-row">
          <div class="hscroll"><div class="hthumb"></div></div>
          <svg class="rgb" width="26" height="32" viewBox="0 0 26 32" v-html="icons.rgb"></svg>
        </div>
      </section>

      <b class="rsep"></b>

      <aside class="snaps">
        <template v-for="(s, n) in snaps" :key="n">
          <div v-if="s.sep" class="ssep"><b></b></div>
          <div v-else class="snap"><div class="sbtn" :class="{ on: s.on }"><svg viewBox="0 0 32 32" width="32" height="32" v-html="icons[s.i]"></svg></div></div>
        </template>
        <div class="smore"><i class="rt"></i></div>
      </aside>
    </div>

    <div class="palette">
      <div class="swatches">
        <svg class="none" width="21" height="26" viewBox="0 0 21 26"><rect width="21" height="26" fill="#fff"/><path d="M1 0l19 26M20 0L1 26" stroke="#8a2222" stroke-width="2"/></svg>
        <i v-for="(c, n) in palette" :key="n" class="sw" :style="{ background: c }"></i>
      </div>
      <i class="lf"></i>
    </div>

    <div class="pscroll"><div class="pthumb"></div></div>

    <footer class="status">
      <div class="sel-style">
        <span>Fill:</span><span class="un">Unset</span>
        <span>Stroke:</span><span class="un">Unset</span>
      </div>
      <label class="o-l">O:</label>
      <div class="spin o-spin">
        <span class="sv">0</span>
        <span class="sa"><i class="up dis"></i><i class="dn"></i></span>
      </div>
      <b class="st-sep"></b>
      <svg class="st-eye" viewBox="0 0 26 32" width="26" height="32" v-html="icons.eye"></svg>
      <svg class="st-lock" viewBox="0 0 22 32" width="22" height="32" v-html="icons.unlock"></svg>
      <div class="layer"><span>•Layer 1</span><i class="dn"></i></div>
      <div class="msg"><strong>Group</strong> of <strong>6</strong> objects in layer <strong>Layer 1</strong>. Click selection to toggle scale/rotation handles.</div>
      <div class="coords">
        <span>X:</span><span class="cv">-79.26</span>
        <span>Y:</span><span class="cv">235.92</span>
      </div>
      <label class="z-l">Z:</label>
      <div class="spin z-spin">
        <span class="sv">86%</span>
        <span class="sa"><i class="up"></i></span>
      </div>
      <svg class="grip" width="29" height="29" viewBox="0 0 29 29"><rect width="29" height="29" fill="#e8e8e6"/><path d="M0 0v29M0 1h29" stroke="#d8d8d6" stroke-width="2"/><path d="M12 29L29 10M19 29L29 18M26 29l3-4" stroke="#aaa" stroke-width="1.500"/></svg>
    </footer>
  </div>
</template>

<style scoped>
.win { width: 2554px; height: 1458px; overflow: hidden; display: flex; flex-direction: column; background: #e8e8e6; font-family: "DejaVu Sans", sans-serif; color: #2e3436; font-size: 20px; }
.defs { flex: none; display: block; }
.win svg { overflow: visible; }

.title { height: 40px; flex: none; display: grid; grid-template-columns: 1fr auto 1fr; align-items: center; background: linear-gradient(#ebebeb, #d0d0d0); }
.lights { display: flex; gap: 16px; padding-left: 10px; margin-top: -4px; }
.lights i { width: 24px; height: 24px; border-radius: 50%; display: block; }
.l-r { background: #fc5b57; border: 1px solid #e2463f; box-sizing: border-box; }
.l-y { background: #fdbc40; border: 1px solid #dfa023; box-sizing: border-box; }
.l-g { background: #33c748; border: 1px solid #27aa35; box-sizing: border-box; }
.title-c { display: flex; align-items: center; gap: 14px; font: 26.5px "Liberation Sans", sans-serif; color: #222; margin: -2px 8px 0 0; }
.xicon { display: block; }

.menu { height: 44px; flex: none; box-sizing: content-box; border-bottom: 2px solid #d4d4d2; display: flex; align-items: center; gap: 31.500px; padding-left: 9px; font-size: 22.500px; }

.tb { display: flex; align-items: center; flex: none; padding-left: 2px; }
.tb1 { height: 70px; padding-top: 2px; box-sizing: border-box; }
.tb2 { height: 78px; }
.ti { width: 30px; height: 32px; margin: 0 13px; flex: none; }
.vsep { width: 2px; height: 42px; background: #d4d4d2; margin: 0 11px 0 11px; flex: none; display: block; }
.vsep2 { margin: 0 14px; }

.field { display: flex; align-items: center; flex: none; color: #555; font-size: 19px; }
.fx { margin-left: 16px; } .fx label { width: 31px; }
.fy { margin-left: 21px; } .fy label { width: 32px; }
.fw { margin-left: 19px; } .fw label { width: 37px; }
.fh { margin-left: 12px; } .fh label { width: 32px; }
.spin { width: 150px; height: 53px; box-sizing: border-box; border: 2px solid #c6c6c4; border-radius: 7px; background: #fff; display: flex; color: #2e3436; font-size: 20px; }
.sv { flex: 1; display: flex; align-items: center; padding-left: 17px; }
.sa { width: 23px; display: flex; flex-direction: column; border-left: 2px solid #e6e6e4; }
.sa i { flex: 1; display: flex; align-items: center; justify-content: center; }
.up, .dn { display: block; width: 0; height: 0; border-left: 8px solid transparent; border-right: 8px solid transparent; }
.sa .up, .sa .dn { flex: none; margin: 7px auto; }
.up { border-bottom: 10px solid #2e3436; }
.dn { border-top: 10px solid #2e3436; }
.up.dis { border-bottom-color: #a8a8a6; }
.padlock { width: 28px; height: 30px; margin: 0 17px 0 18px; flex: none; }

.unit { margin-left: 7px; width: 84px; height: 44px; box-sizing: border-box; border: 2px solid #b6b6b4; border-radius: 7px; background: linear-gradient(#e8e8e6, #d2d2d0); display: flex; align-items: center; justify-content: space-between; padding: 0 9px; flex: none; color: #444; }
.unit .dn { border-top-color: #444; }
.toggles { display: flex; gap: 5px; flex: none; }
.tog { width: 51px; height: 55px; box-sizing: border-box; border: 2px solid #c8c8c6; border-radius: 7px; background: #d8d8d6; display: flex; align-items: center; justify-content: center; }

.main { height: 1102px; flex: none; display: flex; }
.tools { width: 68px; flex: none; padding-top: 9px; box-sizing: border-box; display: flex; flex-direction: column; }
.tool { height: 63.800px; flex: none; display: flex; align-items: center; justify-content: center; box-sizing: border-box; margin: 0 5px; border: 2px solid transparent; border-radius: 7px; }
.tool.on { height: 60px; margin-bottom: 3.800px; background: #d8d8d6; border-color: #c8c8c6; }
.tool.on svg { margin-top: 2px; }
.more { height: 36px; display: flex; align-items: center; justify-content: center; flex: none; }
.rt { display: block; width: 0; height: 0; border-top: 9px solid transparent; border-bottom: 9px solid transparent; border-left: 10px solid #2e3436; }
.lf { display: block; width: 0; height: 0; border-top: 9px solid transparent; border-bottom: 9px solid transparent; border-right: 10px solid #2e3436; }

.center { width: 2400px; flex: none; display: flex; flex-direction: column; }
.ruler-row { height: 36px; display: flex; flex: none; }
.corner { width: 44px; flex: none; display: flex; justify-content: flex-end; padding: 7px 8px 0 0; box-sizing: border-box; }
.rlock { display: block; }
.hr, .vr, .canvas { display: block; flex: none; }
.win .hr, .win .vr, .win .canvas { overflow: hidden; }
.srch { display: block; margin: 2px 0 0 1px; }
.rt-t { font: 13.500px "DejaVu Sans", sans-serif; fill: #4a4f50; }
.canvas-row { height: 1030px; display: flex; flex: none; }
.vscroll { width: 26px; margin-left: 4px; background: #c1c3c2; border-left: 4px solid #b2b2b0; box-sizing: border-box; flex: none; }
.vthumb { width: 12px; height: 161px; border-radius: 6px; background: #7a7d7d; margin: 402px 0 0 4px; }
.hs-row { margin-top: 4px; height: 26px; display: flex; flex: none; padding-left: 44px; }
.hscroll { width: 2312px; height: 26px; box-sizing: border-box; border-top: 3px solid #b2b2b0; background: #c1c3c2; flex: none; }
.hthumb { width: 1196px; height: 12px; border-radius: 6px; background: #7a7d7d; margin: 5px 0 0 518px; }
.rgb { display: block; flex: none; margin: -3px 0 0 4px; }

.rsep { width: 2px; flex: none; background: #b9b9b7; display: block; }
.snaps { width: 84px; flex: none; padding-top: 7px; box-sizing: border-box; display: flex; flex-direction: column; }
.snap { height: 56px; flex: none; display: flex; align-items: center; padding-left: 22px; }
.sbtn { width: 52px; height: 52px; box-sizing: border-box; border: 2px solid transparent; border-radius: 7px; display: flex; align-items: center; justify-content: center; }
.sbtn.on { background: #d8d8d6; border-color: #bcbcba; }
.ssep { height: 24px; flex: none; display: flex; align-items: center; padding-left: 30px; }
.ssep b { display: block; width: 32px; height: 2px; background: #d2d2d0; }
.smore { height: 100px; display: flex; align-items: center; padding-left: 39px; flex: none; margin-top: 2px; }

.palette { margin-top: 2px; height: 26px; flex: none; display: flex; align-items: center; }
.swatches { width: 2528px; height: 26px; overflow: hidden; display: flex; flex: none; }
.none { display: block; flex: none; }
.sw { display: block; width: 26px; height: 26px; flex: none; }
.palette .lf { margin-left: 8px; }
.pscroll { margin-top: 4px; width: 2530px; height: 26px; flex: none; box-sizing: border-box; border-top: 3px solid #b2b2b0; background: #c1c3c2; }
.pthumb { width: 558px; height: 12px; border-radius: 6px; background: #7a7d7d; margin-top: 5px; }

.status { height: 64px; flex: none; box-sizing: border-box; border-bottom: 2px solid #2e3436; background: linear-gradient(#e9e9e7, #dededc); display: flex; align-items: center; position: relative; }
.sel-style { width: 240px; flex: none; display: grid; grid-template-columns: 127px 1fr; font-size: 18px; row-gap: 6px; color: #444; line-height: 22px; margin-top: 2px; }
.un { font-size: 19.500px; letter-spacing: 1px; color: #333; }
.o-l { margin-left: 10px; width: 27px; flex: none; color: #555; font-size: 19px; }
.o-spin { width: 90px; flex: none; background: linear-gradient(#fff, #f2f2f0); }
.o-spin .sv { padding-left: 20px; }
.st-sep { width: 2px; height: 62px; margin-left: 8px; background: #d2d2d0; flex: none; display: block; }
.st-eye { margin-left: 18px; flex: none; }
.st-lock { margin-left: 32px; flex: none; }
.layer { margin-left: 17px; width: 164px; height: 53px; box-sizing: border-box; border: 2px solid #bcbcba; border-radius: 7px; background: linear-gradient(#ececea, #c8c8c6); display: flex; align-items: center; justify-content: space-between; padding: 0 18px 0 17px; flex: none; color: #333; }
.msg { margin-left: 6px; flex: none; white-space: nowrap; color: #3c4142; font-size: 22px; letter-spacing: .72px; }
.msg strong { font-weight: 700; }
.coords { position: absolute; left: 2287px; top: 4px; width: 113px; height: 58px; box-sizing: border-box; border-left: 2px solid #d2d2d0; padding-left: 4px; display: grid; grid-template-columns: auto 1fr; align-content: center; row-gap: 6px; font-size: 19px; line-height: 22px; color: #444; }
.cv { text-align: right; letter-spacing: 1px; }
.z-l { position: absolute; left: 2418px; top: 21px; color: #444; font-size: 19px; }
.z-spin { position: absolute; left: 2443px; top: 6px; width: 111px; background: linear-gradient(#fff, #f2f2f0); }
.z-spin .sv { padding-left: 31px; }
.z-spin .sa { border-left: 2px solid #e6e6e4; }
.grip { position: absolute; right: 0; bottom: 0; display: block; }
</style>

<style>
.svg-serif { font-family: "Liberation Serif", serif; font-weight: 700; fill: #000; }
.svg-bold { font-family: "DejaVu Sans", sans-serif; font-weight: 700; fill: #111; }
</style>
